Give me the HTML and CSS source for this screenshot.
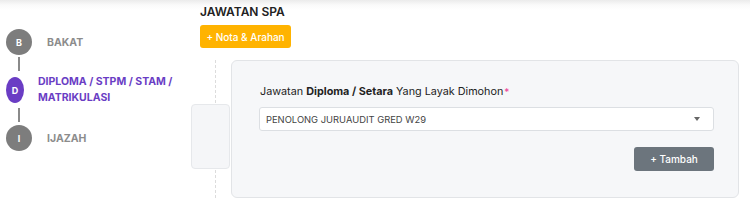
FILE: index.html
```html
<!DOCTYPE html>
<html lang="ms">
<head>
    <meta charset="UTF-8">
    <title>Jawatan SPA</title>
    <link rel="stylesheet" href="styles.css">
</head>
<body>

<div class="page">
    <div class="steps">
        <div class="step">
            <div class="step-dot">B</div>
            <div class="step-label">BAKAT</div>
        </div>
        <div class="step-line"></div>
        <div class="step active">
            <div class="step-dot">D</div>
            <div class="step-label">DIPLOMA / STPM / STAM / MATRIKULASI</div>
        </div>
        <div class="step-line"></div>
        <div class="step">
            <div class="step-dot">I</div>
            <div class="step-label">IJAZAH</div>
        </div>
    </div>

    <div class="main">
        <div class="main-head">
            <h3>JAWATAN SPA</h3>
            <button class="btn-nota">+ Nota &amp; Arahan</button>
        </div>

        <div class="form-row">
            <div class="timeline">
                <div class="timeline-box"></div>
            </div>
            <div class="card">
                <label class="field-label">Jawatan <b>Diploma / Setara</b> Yang Layak Dimohon<span class="req">*</span></label>
                <div class="select">
                    <span>PENOLONG JURUAUDIT GRED W29</span>
                    <span class="caret"></span>
                </div>
                <div class="actions">
                    <button class="btn-tambah">+ Tambah</button>
                </div>
            </div>
        </div>
    </div>
</div>

</body>
</html>
```

FILE: styles.css
```css
body {
    font-family: 'Inter', 'Noto Sans', sans-serif;
    background: linear-gradient(to bottom, #ebebeb, #fafafa 5px, #fff 10px);
    margin: 0;
    height: 207px;
    overflow: hidden;
}

.page {
    display: flex;
}

/* left steps */
.steps {
    width: 185px;
    padding: 29px 0 0 6px;
}

.step {
    display: flex;
    align-items: center;
    gap: 15px;
}

.step-dot {
    width: 26px;
    height: 26px;
    border-radius: 50%;
    background: #7d7d7d;
    color: #fff;
    font-size: 9px;
    font-weight: 700;
    display: flex;
    align-items: center;
    justify-content: center;
    flex-shrink: 0;
}

.step-label {
    font-size: 10.5px;
    font-weight: 700;
    color: #8c8c8c;
}

.step.active {
    gap: 14px;
}

.step.active .step-dot {
    width: 18px;
    background: #6a3dc4;
}

.step.active .step-label {
    color: #6a3dc4;
    line-height: 16px;
}

.step-line {
    width: 2px;
    height: 14px;
    background: #8a8a8a;
    margin: 2px 0 3px 12px;
}

/* main */
.main {
    flex: 1;
}

.main-head {
    padding-left: 9px;
}

.main-head h3 {
    margin: 5px 0 0;
    font-size: 12px;
    font-weight: 600;
    color: #222;
    line-height: 14px;
}

.btn-nota {
    margin-top: 6px;
    background: #ffb300;
    color: #fff;
    border: none;
    border-radius: 3px;
    font-family: inherit;
    font-size: 10px;
    font-weight: 500;
    height: 23px;
    width: 91px;
    padding: 0;
}

.form-row {
    display: flex;
    margin-top: 12px;
}

.timeline {
    position: relative;
    width: 40px;
    padding-top: 44px;
    padding-bottom: 20px;
}

.timeline::before {
    content: '';
    position: absolute;
    left: 24px;
    top: 0;
    bottom: 0;
    border-left: 1px dashed #dcdcdc;
}

.timeline-box {
    position: relative;
    width: 37px;
    height: 63px;
    background: #f5f6f8;
    border: 1px solid #e6e8eb;
    border-radius: 4px;
}

.card {
    flex: 1;
    margin-right: 11px;
    height: 138px;
    background: #f6f7f9;
    border: 1px solid #e2e4e7;
    border-radius: 6px;
    padding: 24px 24px 0 28px;
    box-sizing: border-box;
}

.field-label {
    display: block;
    font-size: 10.8px;
    color: #222;
    line-height: 14px;
}

.field-label b {
    font-weight: 700;
}

.req {
    color: #ee3d96;
    font-size: 10px;
    margin-left: 1px;
    vertical-align: -1px;
}

.select {
    margin-top: 8px;
    margin-left: -1px;
    height: 24px;
    background: #fff;
    border: 1px solid #dcdfe3;
    border-radius: 3px;
    box-sizing: border-box;
    display: flex;
    align-items: center;
    justify-content: space-between;
    padding: 0 13px 0 6px;
    font-size: 9.4px;
    color: #444;
}

.caret {
    width: 0;
    height: 0;
    border-left: 3.5px solid transparent;
    border-right: 3.5px solid transparent;
    border-top: 4px solid #666;
}

.actions {
    display: flex;
    justify-content: flex-end;
    margin-top: 16px;
}

.btn-tambah {
    background: #6c757d;
    color: #fff;
    border: none;
    border-radius: 3px;
    font-family: inherit;
    font-size: 10px;
    font-weight: 500;
    height: 24px;
    width: 80px;
    padding: 0;
}
```
